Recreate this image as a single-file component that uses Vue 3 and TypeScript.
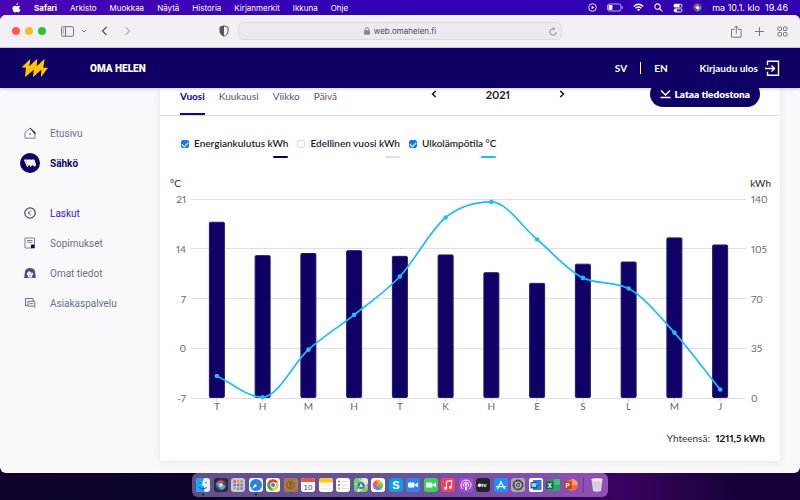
<script setup lang="ts">
import { computed, ref } from 'vue'

interface Series { id: string; label: string; color: string }
interface Reading { month: string; energy: number; temp: number }

const menus = ['Arkisto', 'Muokkaa', 'Näytä', 'Historia', 'Kirjanmerkit', 'Ikkuna', 'Ohje']
const periods = ['Vuosi', 'Kuukausi', 'Viikko', 'Päivä']
const period = ref('Vuosi')

const series: Series[] = [
  { id: 'energy', label: 'Energiankulutus kWh', color: '#0f0065' },
  { id: 'previous', label: 'Edellinen vuosi kWh', color: '#cfe2fa' },
  { id: 'temp', label: 'Ulkolämpötila °C', color: '#1fbcff' },
]
const visible = ref<string[]>(['energy', 'temp'])

const readings: Reading[] = [
  { month: 'T', energy: 124, temp: -3.9 },
  { month: 'H', energy: 100.5, temp: -6.9 },
  { month: 'M', energy: 102, temp: -0.2 },
  { month: 'H', energy: 104, temp: 4.7 },
  { month: 'T', energy: 100, temp: 10.1 },
  { month: 'K', energy: 101, temp: 18.4 },
  { month: 'H', energy: 88.5, temp: 20.6 },
  { month: 'E', energy: 81, temp: 15.3 },
  { month: 'S', energy: 94.5, temp: 9.9 },
  { month: 'L', energy: 96, temp: 8.4 },
  { month: 'M', energy: 113, temp: 2.2 },
  { month: 'J', energy: 108, temp: -5.8 },
]

const plot = { left: 34, right: 583, top: 24, bottom: 223 }
const ticks = [0, 1, 2, 3, 4].map((i) => ({
  y: plot.bottom - (i * (plot.bottom - plot.top)) / 4,
  temp: -7 + i * 7,
  energy: i * 35,
}))
const step = (plot.right - plot.left) / readings.length
const height = plot.bottom - plot.top

const bars = readings.map((r, i) => ({
  month: r.month,
  x: plot.left + step * (i + 0.5),
  h: (r.energy / 140) * height,
}))
const points = readings.map((r, i) => ({
  x: plot.left + step * (i + 0.5),
  y: plot.bottom - ((r.temp + 7) / 28) * height,
}))

// Monotone cubic interpolation: the curve never overshoots a reading.
const curve = computed(() => {
  const n = points.length
  const slopes = points.slice(1).map((p, i) => (p.y - points[i].y) / step)
  const m = points.map((_, i) => {
    if (i === 0) return slopes[0]
    if (i === n - 1) return slopes[n - 2]
    return slopes[i - 1] * slopes[i] <= 0 ? 0 : (slopes[i - 1] + slopes[i]) / 2
  })
  slopes.forEach((s, i) => {
    if (s === 0) {
      m[i] = m[i + 1] = 0
      return
    }
    const a = m[i] / s
    const b = m[i + 1] / s
    const sq = a * a + b * b
    if (sq > 9) {
      const t = 3 / Math.sqrt(sq)
      m[i] = a * t * s
      m[i + 1] = b * t * s
    }
  })
  const c = step / 3
  return points.slice(1).reduce((d, p, i) => {
    const q = points[i]
    return `${d} C${q.x + c} ${q.y + c * m[i]} ${p.x - c} ${p.y - c * m[i + 1]} ${p.x} ${p.y}`
  }, `M${points[0].x} ${points[0].y}`)
})
</script>

<template>
  <div class="desktop">
    <header class="menubar">
      <svg class="apple" viewBox="0 0 16 18" aria-hidden="true"><path fill="#fff" d="M11 0c.2 2-1.500 3.900-3.300 3.800C7.500 2 9.200.2 11 0zM14.500 6.200c-2.600 1.600-2.200 4.900.6 6-.7 2-2.200 4.900-4 4.900-1.100 0-1.500-.7-2.900-.7s-1.900.7-2.900.7C3 17.100.800 12.900.800 9.800c0-3.200 2-5 4.100-5 1.400 0 2.400.9 3.300.9.800 0 2.100-1 3.800-.9 1 0 2 .5 2.500 1.400z"/></svg>
      <strong>Safari</strong>
      <span v-for="m in menus" :key="m">{{ m }}</span>
      <div class="status">
        <svg viewBox="0 0 10 10" width="9" height="9" fill="none" stroke="#fff"><circle cx="5" cy="5" r="4.200"/><path d="M4 3l3 2-3 2z" fill="#fff" stroke="none"/></svg>
        <svg viewBox="0 0 16 9" width="16" height="9" fill="none"><rect x=".5" y="1" width="13.500" height="7" rx="2" stroke="#b9a9ef"/><rect x="1.500" y="2" width="4" height="5" rx="1" fill="#fff"/><path d="M15.300 3.300v2.400" stroke="#b9a9ef"/></svg>
        <svg viewBox="0 0 12 9" width="11" height="9" fill="none" stroke="#fff" stroke-width="1.400"><path d="M.8 3.300q5.200-4.600 10.400 0M2.800 5.400q3.200-2.800 6.400 0"/><path d="M4.300 6.600q1.700-1.300 3.400 0L6 8.500z" fill="#fff" stroke="none"/></svg>
        <svg viewBox="0 0 10 10" width="9" height="9" fill="none" stroke="#fff" stroke-width="1.200"><circle cx="4" cy="4" r="3"/><path d="M6.300 6.300l3 3"/></svg>
        <svg viewBox="0 0 10 10" width="10" height="10"><rect x=".5" y=".8" width="9" height="3.800" rx="1.900" fill="#fff"/><circle cx="7.500" cy="2.700" r="1.200" fill="#3500b0"/><rect x="1" y="5.900" width="8" height="3" rx="1.500" fill="none" stroke="#fff"/><circle cx="2.600" cy="7.400" r="1.400" fill="#fff"/></svg>
        <svg viewBox="0 0 10 10" width="9" height="9"><circle cx="5" cy="5" r="4.800" fill="#5a4a78"/><path d="M1 6A4.300 4.300 0 0 1 7 1.500L5 5z" fill="#d9507f"/><path d="M9 4a4.300 4.300 0 0 1-5 5l1-4z" fill="#35b3ad"/><circle cx="5" cy="5" r="1.700" fill="#fff"/></svg>
        <time>ma 10.1. klo&nbsp; 19.46</time>
      </div>
    </header>

    <section class="window">
      <div class="toolbar">
        <div class="tools">
          <i class="light red"></i><i class="light amber"></i><i class="light green"></i>
          <button class="side" aria-label="Sivupalkki"><svg viewBox="0 0 13 11" width="13" height="11" fill="none" stroke="#77747d"><rect x=".5" y=".7" width="12" height="9.600" rx="1.500"/><path d="M4.500 1v9M1.800 3h1.400M1.800 5h1.400M1.800 7h1.400"/></svg></button>
          <button class="down" aria-label="Näytä valinnat"><svg viewBox="0 0 6 6" width="6" height="6" fill="none" stroke="#77747d"><path d="M1 2l2 2 2-2"/></svg></button>
          <button class="back" aria-label="Takaisin"><svg viewBox="0 0 7 10" width="7" height="10" fill="none" stroke="#55525b" stroke-width="1.200"><path d="M5.500 1l-4 4 4 4"/></svg></button>
          <button class="forward" aria-label="Eteenpäin"><svg viewBox="0 0 7 10" width="7" height="10" fill="none" stroke="#b7b4bc" stroke-width="1.200"><path d="M1.500 1l4 4-4 4"/></svg></button>
        </div>
        <svg class="shield" viewBox="0 0 10 12" width="10" height="12"><path d="M5 .8l4 1.400v4C9 8.700 7.300 10.300 5 11.300 2.700 10.300 1 8.700 1 6.200v-4z" fill="none" stroke="#55525b"/><path d="M5 .8v10.500C2.700 10.300 1 8.700 1 6.200v-4z" fill="#55525b"/></svg>
        <div class="address">
          <svg viewBox="0 0 6 8" width="6" height="8"><rect y="3.200" width="6" height="4.500" rx="1" fill="#87848d"/><path d="M1.300 3.500V2.300q0-1.600 1.700-1.600t1.700 1.600v1.200" fill="none" stroke="#87848d"/></svg>
          <span>web.omahelen.fi</span>
          <button class="reload" aria-label="Lataa uudelleen"><svg viewBox="0 0 8 9" width="8" height="9" fill="none" stroke="#8d8a92"><path d="M7.300 5A3.200 3.200 0 1 1 4 1.800h1.300M4 .3l1.500 1.500L4 3.300"/></svg></button>
        </div>
        <div class="actions">
          <button aria-label="Jaa"><svg viewBox="0 0 11 13" width="11" height="13" fill="none" stroke="#77747d"><path d="M3.500 4.500h-3v7.700h9.600V4.500h-3M5.300 8.500V1M3 3.200L5.300.9l2.300 2.300"/></svg></button>
          <button aria-label="Uusi välilehti"><svg viewBox="0 0 9 9" width="9" height="9" stroke="#77747d"><path d="M4.500 0v9M0 4.500h9"/></svg></button>
          <button aria-label="Välilehdet"><svg viewBox="0 0 11 11" width="11" height="11" fill="none" stroke="#77747d"><rect x="1" y="1" width="3.500" height="3.500" rx=".7"/><rect x="6.500" y="1" width="3.500" height="3.500" rx=".7"/><rect x="1" y="6.500" width="3.500" height="3.500" rx=".7"/><rect x="6.500" y="6.500" width="3.500" height="3.500" rx=".7"/></svg></button>
        </div>
      </div>

      <div class="site-header">
        <svg class="logo" viewBox="0 0 28 20" width="28" height="20"><path fill="#ffc60b" d="M10.300 1L1.700 9.300 6 9.700 5 19.300l8.700-7.600-.7 7.600 8.300-7.600-.3 7.600 7-9.600h-4.700l1.400-9-8 7.600.6-7.600-8 7.600z"/></svg>
        <strong class="brand">OMA HELEN</strong>
        <nav class="lang"><a href="#sv">SV</a><i></i><a href="#en">EN</a></nav>
        <a class="logout" href="#ulos">Kirjaudu ulos
          <svg viewBox="0 0 15 17" width="15" height="17" fill="none" stroke="#fff" stroke-width="1.400"><path d="M2.500 5V1.200h11v14h-11v-3.500M0 8.500h9M6.500 5.500l3 3-3 3"/></svg>
        </a>
      </div>

      <div class="page">
        <nav class="sidebar">
          <a href="#etusivu"><span class="ico"><svg viewBox="0 0 12 12" width="12" height="12" fill="none" stroke="#6c7094" stroke-width=".9"><path d="M1 5.500v5.700h10V5.500L6 1z"/><path d="M6 1l5 4.500V7z" fill="#27306c" stroke="#27306c"/><circle cx="6" cy="7" r=".8" fill="#27306c" stroke="none"/></svg></span>Etusivu</a>
          <a href="#sahko" class="current"><span class="ico disc"><svg viewBox="0 0 12 8" width="12" height="8" fill="none" stroke="#fff" stroke-width="1.500"><path d="M.3 1.200h2.500L5 6.500M.8 1.200l2.400 5.300L4.400 1.200h1.800l2.200 5.300M4.400 1.200l2.300 5.300L8 1.200h1.800L11.500 6M8 1.200l2.200 5.300h1.500"/></svg></span>Sähkö</a>
          <a href="#laskut" class="active gap"><span class="ico"><svg viewBox="0 0 12 12" width="12" height="12" fill="none" stroke="#3d4679"><circle cx="6" cy="6" r="5.200" stroke-width="1.200"/><path d="M7.700 4.200Q4.500 3 4.500 6t3.200 1.800M3.800 5.500h2.500M3.800 6.500h2.500" stroke-width=".5"/></svg></span>Laskut</a>
          <a href="#sopimukset"><span class="ico"><svg viewBox="0 0 12 12" width="12" height="12" fill="none" stroke="#6c7094" stroke-width=".9"><path d="M1 1h9.500v6.500L7.500 11H1zM3 3.500h5.500M3 5.300h5.500"/><path d="M10.700 7.500v3.700H7V8.500q0-1 1-1z" fill="#0f0065" stroke="none"/></svg></span>Sopimukset</a>
          <a href="#tiedot"><span class="ico"><svg viewBox="0 0 12 12" width="12" height="12"><path d="M.2 11L1 4.500Q1.500 1 6 1t5 3.500l.8 6.500z" fill="#47507e"/><path d="M2.800 6Q4 5.500 5 4q2 1.800 4.200 2-.1 2.300-1.500 3.300l1 1.200H3.300l1-1.200Q2.900 8.300 2.800 6z" fill="#fff"/><path d="M4.500 6.500h.8M6.800 6.500h.8M5 8.500q1 .6 2 0" stroke="#47507e" stroke-width=".7" fill="none"/></svg></span>Omat tiedot</a>
          <a href="#palvelu"><span class="ico"><svg viewBox="0 0 12 12" width="12" height="12" fill="none" stroke="#6c7094"><path d="M4 8H3L1.500 9.200V1.500H9V4M4 4.300h6.800v6L9.500 9.200H4zM5.500 6.700h3.800"/></svg></span>Asiakaspalvelu</a>
        </nav>

        <main class="card">
          <div class="controls">
            <div class="tabs">
              <button v-for="p in periods" :key="p" :class="{ on: p === period }" @click="period = p">{{ p }}</button>
            </div>
            <div class="year">
              <button aria-label="Edellinen vuosi"><svg viewBox="0 0 6 8" width="6" height="8" fill="none" stroke="#111" stroke-width="1.500"><path d="M4.700 1L1.500 4l3.200 3"/></svg></button>
              <strong>2021</strong>
              <button aria-label="Seuraava vuosi"><svg viewBox="0 0 6 8" width="6" height="8" fill="none" stroke="#111" stroke-width="1.500"><path d="M1.300 1l3.200 3-3.200 3"/></svg></button>
            </div>
            <div class="end">
              <button class="download"><svg viewBox="0 0 11 10" width="11" height="10" fill="none" stroke="#fff" stroke-width="1.500"><path d="M1 1.500L5.500 6 10 1.500M.5 8.500h10"/></svg>Lataa tiedostona</button>
            </div>
          </div>

          <div class="legend">
            <label v-for="s in series" :key="s.id">
              <input v-model="visible" type="checkbox" :value="s.id">
              <span>{{ s.label }}<i :style="{ background: s.color }"></i></span>
            </label>
          </div>

          <svg class="chart" viewBox="0 0 620 240" role="img" aria-label="Energiankulutus ja ulkolämpötila 2021">
            <text class="unit" x="10" y="12">°C</text>
            <text class="unit" x="611" y="12" text-anchor="end">kWh</text>
            <g v-for="t in ticks" :key="t.energy">
              <path class="grid" :d="`M31 ${Math.floor(t.y) + 0.5}H586`" />
              <text class="tick" x="26" :y="t.y + 4" text-anchor="end">{{ t.temp }}</text>
              <text class="tick" x="591" :y="t.y + 4">{{ t.energy }}</text>
            </g>
            <g v-for="(b, i) in bars" :key="i">
              <path class="mark" :d="`M${b.x} 223v4`" />
              <rect v-if="visible.includes('energy')" class="bar" :x="b.x - 7.5" :y="223 - b.h + 0.5" width="15" :height="b.h - 1" rx="1" />
              <text class="tick" :x="b.x" y="235" text-anchor="middle">{{ b.month }}</text>
            </g>
            <g v-if="visible.includes('temp')">
              <path class="line" :d="curve" />
              <circle v-for="(p, i) in points" :key="i" :cx="p.x" :cy="p.y" r="2.300" fill="#1fbcff" />
            </g>
          </svg>

          <p class="total">Yhteensä: <strong>1211,5 kWh</strong></p>
        </main>
      </div>
    </section>

    <footer class="dock-row">
      <div class="dock">
        <svg viewBox="0 0 14 14"><rect width="14" height="14" rx="3" fill="#e6edf5"/><path d="M3 0h5Q6 4 6 8h2q0 3 .5 6H3q-3 0-3-3V3q0-3 3-3z" fill="#1ba5f5"/><path d="M4 4v1.500M10 4v1.500M3 9.500q4 3 8 0" fill="none" stroke="#153c68" stroke-width=".8"/><circle cx="7" cy="16.500" r="1" fill="#17102a"/></svg>
        <svg viewBox="0 0 14 14"><rect width="14" height="14" rx="3" fill="#2b2737"/><circle cx="7" cy="7" r="5.500" fill="#5b406f"/><path d="M2 6q4-5 6-1t4 2q-2 6-6 4" fill="#35b8bb"/><path d="M3 4q4-3 7 0L7 7z" fill="#df426e"/><circle cx="7" cy="7" r="1.700" fill="#e8faff"/></svg>
        <svg viewBox="0 0 14 14"><rect width="14" height="14" rx="3" fill="#c9c9d4"/><g stroke-width="2.300"><path d="M2.500 3.500h2.300M9.500 7h2.300" stroke="#ee4b55"/><path d="M6 3.500h2.300M2.500 10.500h2.300" stroke="#f28c32"/><path d="M9.500 3.500h2.300M6 10.500h2.300" stroke="#48bb60"/><path d="M2.500 7h2.300M9.500 10.500h2.300" stroke="#3f83ee"/><path d="M6 7h2.300" stroke="#c249cc"/></g></svg>
        <svg viewBox="0 0 14 14"><rect width="14" height="14" rx="3" fill="#e8f2fb"/><circle cx="7" cy="7" r="6" fill="#1687ec"/><path d="M11 3L8 8 6 6z" fill="#f0444a"/><path d="M3 11l3-5 2 2z" fill="#fff"/><circle cx="7" cy="16.500" r="1" fill="#17102a"/></svg>
        <svg viewBox="0 0 14 14"><rect width="14" height="14" rx="3" fill="#fff"/><circle cx="7" cy="7" r="5.700" fill="#f3c82b"/><path d="M2 4.200A5.700 5.700 0 0 1 12 4.200H7L4.500 8z" fill="#e84437"/><path d="M2 4.200L4.500 8.500 7 12.700A5.700 5.700 0 0 1 2 4.200z" fill="#2daa50"/><circle cx="7" cy="7" r="2.800" fill="#fff"/><circle cx="7" cy="7" r="2.100" fill="#3c7ded"/></svg>
        <svg viewBox="0 0 14 14"><rect width="14" height="14" rx="2" fill="#a97943"/><path d="M13 2v3" stroke="#5aa6d8"/><path d="M13 6v3" stroke="#d98c2b"/><circle cx="6.500" cy="7" r="3.700" fill="none" stroke="#805529"/><circle cx="6.500" cy="6" r="1.400" fill="#805529"/><path d="M4 9.500q2.500-3 5 0z" fill="#805529"/></svg>
        <svg viewBox="0 0 14 14"><rect width="14" height="14" rx="3" fill="#fff"/><path d="M0 4V3q0-3 3-3h8q3 0 3 3v1z" fill="#f05449"/><text x="7" y="12" text-anchor="middle" font-size="8" fill="#444">10</text></svg>
        <svg viewBox="0 0 14 14"><rect width="14" height="14" rx="3" fill="#fffdf2"/><path d="M0 4.500V3q0-3 3-3h8q3 0 3 3v1.500z" fill="#fbc825"/><path d="M1 7.500h12M1 10.500h12" stroke="#e6e2d6" stroke-width=".6"/></svg>
        <svg viewBox="0 0 14 14"><rect width="14" height="14" rx="3" fill="#fff"/><circle cx="3" cy="3.500" r="1" fill="#3b82f6"/><circle cx="3" cy="7" r="1" fill="#ef4444"/><circle cx="3" cy="10.500" r="1" fill="#f59e0b"/><path d="M5.500 3.500H12M5.500 7H12M5.500 10.500H12" stroke="#cfcfd4" stroke-width=".7"/></svg>
        <svg viewBox="0 0 14 14"><rect width="14" height="14" rx="3" fill="#6fcf70"/><path d="M8 0h3q3 0 3 3v2L5 14H3z" fill="#e9e6d6"/><path d="M1 5l8 8M5 1l8 9" stroke="#f4c64a" stroke-width="1.400"/><circle cx="7" cy="7.500" r="3.600" fill="#2479ec"/><path d="M7 5l2 4.500-2-1-2 1z" fill="#fff"/></svg>
        <svg viewBox="0 0 14 14"><rect width="14" height="14" rx="3" fill="#fff"/><g fill-opacity=".85"><circle cx="7" cy="3.800" r="2.200" fill="#f79a2a"/><circle cx="9.500" cy="5" r="2.200" fill="#d9ca2f"/><circle cx="10.300" cy="7.500" r="2.200" fill="#75bf48"/><circle cx="9" cy="9.700" r="2.200" fill="#3db6a0"/><circle cx="6.500" cy="10.300" r="2.200" fill="#3f88df"/><circle cx="4.300" cy="9" r="2.200" fill="#9162ce"/><circle cx="3.700" cy="6.700" r="2.200" fill="#dc4d8f"/><circle cx="4.800" cy="4.700" r="2.200" fill="#f05b3d"/><circle cx="7" cy="7" r="1.800" fill="#e8803d"/></g></svg>
        <svg viewBox="0 0 14 14"><rect width="14" height="14" rx="3.500" fill="#0e9de5"/><text x="7" y="11" text-anchor="middle" font-size="11" font-weight="bold" fill="#fff">S</text></svg>
        <svg viewBox="0 0 14 14"><rect width="14" height="14" rx="3" fill="#2f82f6"/><rect x="2" y="4.500" width="6.500" height="5" rx="1" fill="#fff"/><path d="M9 6.500l3-2v5l-3-2z" fill="#fff"/></svg>
        <svg viewBox="0 0 14 14"><rect width="14" height="14" rx="3" fill="#39d357"/><rect x="2" y="4.500" width="6.500" height="5" rx="1" fill="#fff"/><path d="M9 6.500l3-2v5l-3-2z" fill="#fff"/></svg>
        <svg viewBox="0 0 14 14"><rect width="14" height="14" rx="3" fill="#fb3d55"/><path d="M5.500 10V3.500L10.500 2.500V9" fill="none" stroke="#fff" stroke-width="1.100"/><circle cx="4.500" cy="10.300" r="1.500" fill="#fff"/><circle cx="9.500" cy="9.300" r="1.500" fill="#fff"/></svg>
        <svg viewBox="0 0 14 14"><rect width="14" height="14" rx="3" fill="#a947dc"/><g fill="none" stroke="#fff" stroke-width=".9"><path d="M4 11a5 5 0 1 1 6 0M5 8.700a2.700 2.700 0 1 1 4 0"/></g><circle cx="7" cy="6.500" r="1.200" fill="#fff"/><rect x="6" y="8.200" width="2" height="4" rx="1" fill="#fff"/></svg>
        <svg viewBox="0 0 14 14"><rect width="14" height="14" rx="3" fill="#24232a"/><circle cx="3.500" cy="7.200" r="1.700" fill="#fff"/><text x="5.300" y="9.200" font-size="6" font-weight="bold" fill="#fff">tv</text></svg>
        <svg viewBox="0 0 14 14"><rect width="14" height="14" rx="3" fill="#1994f5"/><path d="M7.500 3L3.500 11M6.500 3l4 8M2.300 8.700h9.400" stroke="#fff" stroke-width="1.200"/></svg>
        <svg viewBox="0 0 14 14"><rect width="14" height="14" rx="3" fill="#a8a8ad"/><circle cx="7" cy="7" r="5" fill="#55555c" stroke="#2e2e34" stroke-dasharray="1 .6"/><circle cx="7" cy="7" r="3" fill="none" stroke="#c5c5c9"/><path d="M7 7L4 4M7 7h4M7 7l-2 4" stroke="#c5c5c9" stroke-width=".7"/></svg>
        <svg viewBox="0 0 14 14"><rect width="14" height="14" rx="2" fill="#fff"/><rect x="4" y="2" width="8.500" height="10" fill="#2e7bd2"/><rect x="1.500" y="4" width="6.500" height="6.500" fill="#1753a5"/><text x="4.750" y="9.300" text-anchor="middle" font-size="5.500" font-weight="bold" fill="#fff">W</text></svg>
        <svg viewBox="0 0 14 14"><rect x="3" y="1" width="11" height="12" rx="1" fill="#28a464"/><path d="M8 1h6v6H8z" fill="#41bf83"/><rect y="3.500" width="7.500" height="7.500" rx=".5" fill="#126d3e"/><text x="3.700" y="9.500" text-anchor="middle" font-size="6.500" font-weight="bold" fill="#fff">X</text></svg>
        <svg viewBox="0 0 14 14"><circle cx="8" cy="7" r="6" fill="#eb6c47"/><path d="M8 1a6 6 0 0 1 6 6H8z" fill="#ff9a78"/><rect y="3.500" width="7.500" height="7.500" rx=".5" fill="#c43e1c"/><text x="3.700" y="9.500" text-anchor="middle" font-size="6.500" font-weight="bold" fill="#fff">P</text></svg>
        <i class="divider"></i>
        <svg viewBox="0 0 14 14"><path d="M1.500 1h11l-1.500 12q-4 1.500-8 0z" fill="#d9d5df"/><ellipse cx="7" cy="1.500" rx="5.500" ry="1.200" fill="#f4f2f6"/><path d="M5 4l.4 8M9 4l-.4 8" stroke="#c0bac9" stroke-width=".6"/></svg>
      </div>
    </footer>
  </div>
</template>

<style>
body { margin: 0; }
</style>

<style scoped>
* { box-sizing: border-box; }
.desktop {
  min-height: 100vh;
  display: flex;
  flex-direction: column;
  font-family: Inter, "Liberation Sans", sans-serif;
  background: linear-gradient(90deg, #4a05b3, #3300b8 40%, #3000ae) top / 100% 24px no-repeat, linear-gradient(90deg, #10042c, #0c0224 35%, #3a0360 78%, #15023a 92%);
}
svg { flex: none; }
button { border: 0; padding: 0; background: none; font: inherit; color: inherit; display: flex; align-items: center; }
a { color: inherit; text-decoration: none; }

.menubar { height: 15px; display: flex; align-items: center; gap: 13px; padding: 0 12px; color: #fff; font-size: 8px; }
.apple { width: 9px; height: 10px; }
.menubar strong { font-weight: 700; }
.status { margin-left: auto; display: flex; align-items: center; gap: 10px; }
.status time { font-size: 9px; }

.window { flex: 1; display: flex; flex-direction: column; overflow: hidden; border-radius: 6px; background: #f9f9fb; }
.toolbar { height: 33px; flex: none; display: grid; grid-template-columns: 1fr 10px 352px 1fr; align-items: center; padding: 0 12px; background: #f2f0f4; border-bottom: 1px solid #c9cad0; }
.tools { display: flex; align-items: center; }
.light { width: 8px; height: 8px; border-radius: 50%; margin-right: 5px; }
.red { background: #fb5b54; }
.amber { background: #fdb927; }
.green { background: #27c53d; }
.side { margin-left: 10px; }
.down { margin-left: 7px; }
.back { margin-left: 14px; }
.forward { margin-left: 16px; }
.address { position: relative; height: 18px; margin-left: 9px; width: 324px; display: flex; align-items: center; justify-content: center; gap: 4px; border: 1px solid #dcdae0; border-radius: 5px; background: #ece9f0; font-size: 8px; color: #4d4a53; }
.reload { position: absolute; right: 4px; }
.actions { display: flex; align-items: center; justify-content: flex-end; gap: 13px; }

.site-header { position: relative; z-index: 1; height: 40px; flex: none; display: flex; align-items: center; padding: 0 20px; background: #0f0065; color: #fff; font: 700 10px Lato, sans-serif; box-shadow: 0 1px 3px #00000030; }
.brand { margin-left: 42px; font-family: Roboto, sans-serif; }
.lang { margin-left: auto; display: flex; align-items: center; gap: 13px; }
.lang i { width: 1px; height: 12px; background: #fff; }
.logout { margin-left: 32px; display: flex; align-items: center; gap: 7px; }

.page { flex: 1; display: grid; grid-template-columns: 160px minmax(0, 1fr); padding: 0 20px 12px 0; }
.sidebar { padding: 30px 0 0 20px; display: flex; flex-direction: column; font: 10px Roboto, sans-serif; color: #6c6e8b; }
.sidebar a { height: 30px; display: flex; align-items: center; gap: 10px; }
.ico { width: 20px; height: 20px; display: grid; place-items: center; }
.disc { background: #0f0065; border-radius: 50%; }
.sidebar .current { font-weight: 700; color: #0f0065; }
.sidebar .active { color: #3518c8; }
.sidebar .gap { margin-top: 20px; }

.card { background: #fff; border-radius: 0 0 3px 3px; box-shadow: 0 1px 8px #00002018; font-family: Lato, sans-serif; font-variant-numeric: proportional-nums; color: #1d1d24; display: flex; flex-direction: column; }
.controls { height: 38px; margin-top: -10px; display: grid; grid-template-columns: 9fr 134px 7fr; padding: 0 20px; border-bottom: 1px solid #dcdce6; }
.tabs { display: flex; gap: 14px; font-size: 10px; color: #55555f; }
.tabs button { height: 37px; border-bottom: 2px solid transparent; }
.tabs .on { color: #0f009a; border-color: #1200a0; font-weight: 700; }
.year { display: flex; justify-content: space-between; align-items: center; height: 32px; font-size: 11px; }
.end { display: flex; justify-content: flex-end; }
.download { height: 26px; margin-top: 3px; padding: 0 10px; gap: 4px; border-radius: 13px; background: #0f0065; color: #fff; font-size: 10px; font-weight: 800; }

.legend { display: flex; gap: 9px; padding: 20px 21px 0; font-size: 10px; font-weight: 600; line-height: 14px; }
.legend label { display: flex; align-items: flex-start; gap: 5px; }
.legend input { appearance: none; width: 8px; height: 8px; margin: 4px 0 0; display: flex; justify-content: center; border: 1px solid #dcdce0; border-radius: 2px; background: #fff; }
.legend input:checked { border-color: #1676f3; background: #1676f3; }
.legend input:checked::after { content: ""; width: 3px; height: 5px; border: solid #fff; border-width: 0 1px 1px 0; transform: rotate(45deg); }
.legend span { display: flex; flex-direction: column; align-items: flex-end; }
.legend i { width: 15px; height: 2px; margin-top: 6px; border-radius: 1px; }

.chart { display: block; width: 100%; height: auto; margin-top: 17px; }
.unit { font-size: 10px; fill: #1d1d24; }
.tick { font-size: 10px; fill: #66666e; }
.grid { stroke: #dfdfe1; fill: none; }
.mark { stroke: #cfcfd4; }
.bar { fill: #0f0065; stroke: #261a72; }
.line { fill: none; stroke: #1fbcff; stroke-width: 1.700; }
.total { margin: 16px 15px 0; text-align: right; font-size: 10px; line-height: 14px; color: #33333b; }
.total strong { color: #111; margin-left: 3px; }

.dock-row { height: 27px; flex: none; display: flex; justify-content: center; align-items: flex-start; }
.dock { width: 52%; height: 24px; display: flex; align-items: center; justify-content: space-between; padding: 0 4px; border-radius: 6px; background: linear-gradient(90deg, #62508a, #66539a 45%, #924fb4); font-family: "Liberation Sans", sans-serif; }
.dock svg { width: 14px; height: 14px; overflow: visible; }
.divider { width: 1px; height: 16px; background: #6d3c92; margin: 0 2px; }
</style>
